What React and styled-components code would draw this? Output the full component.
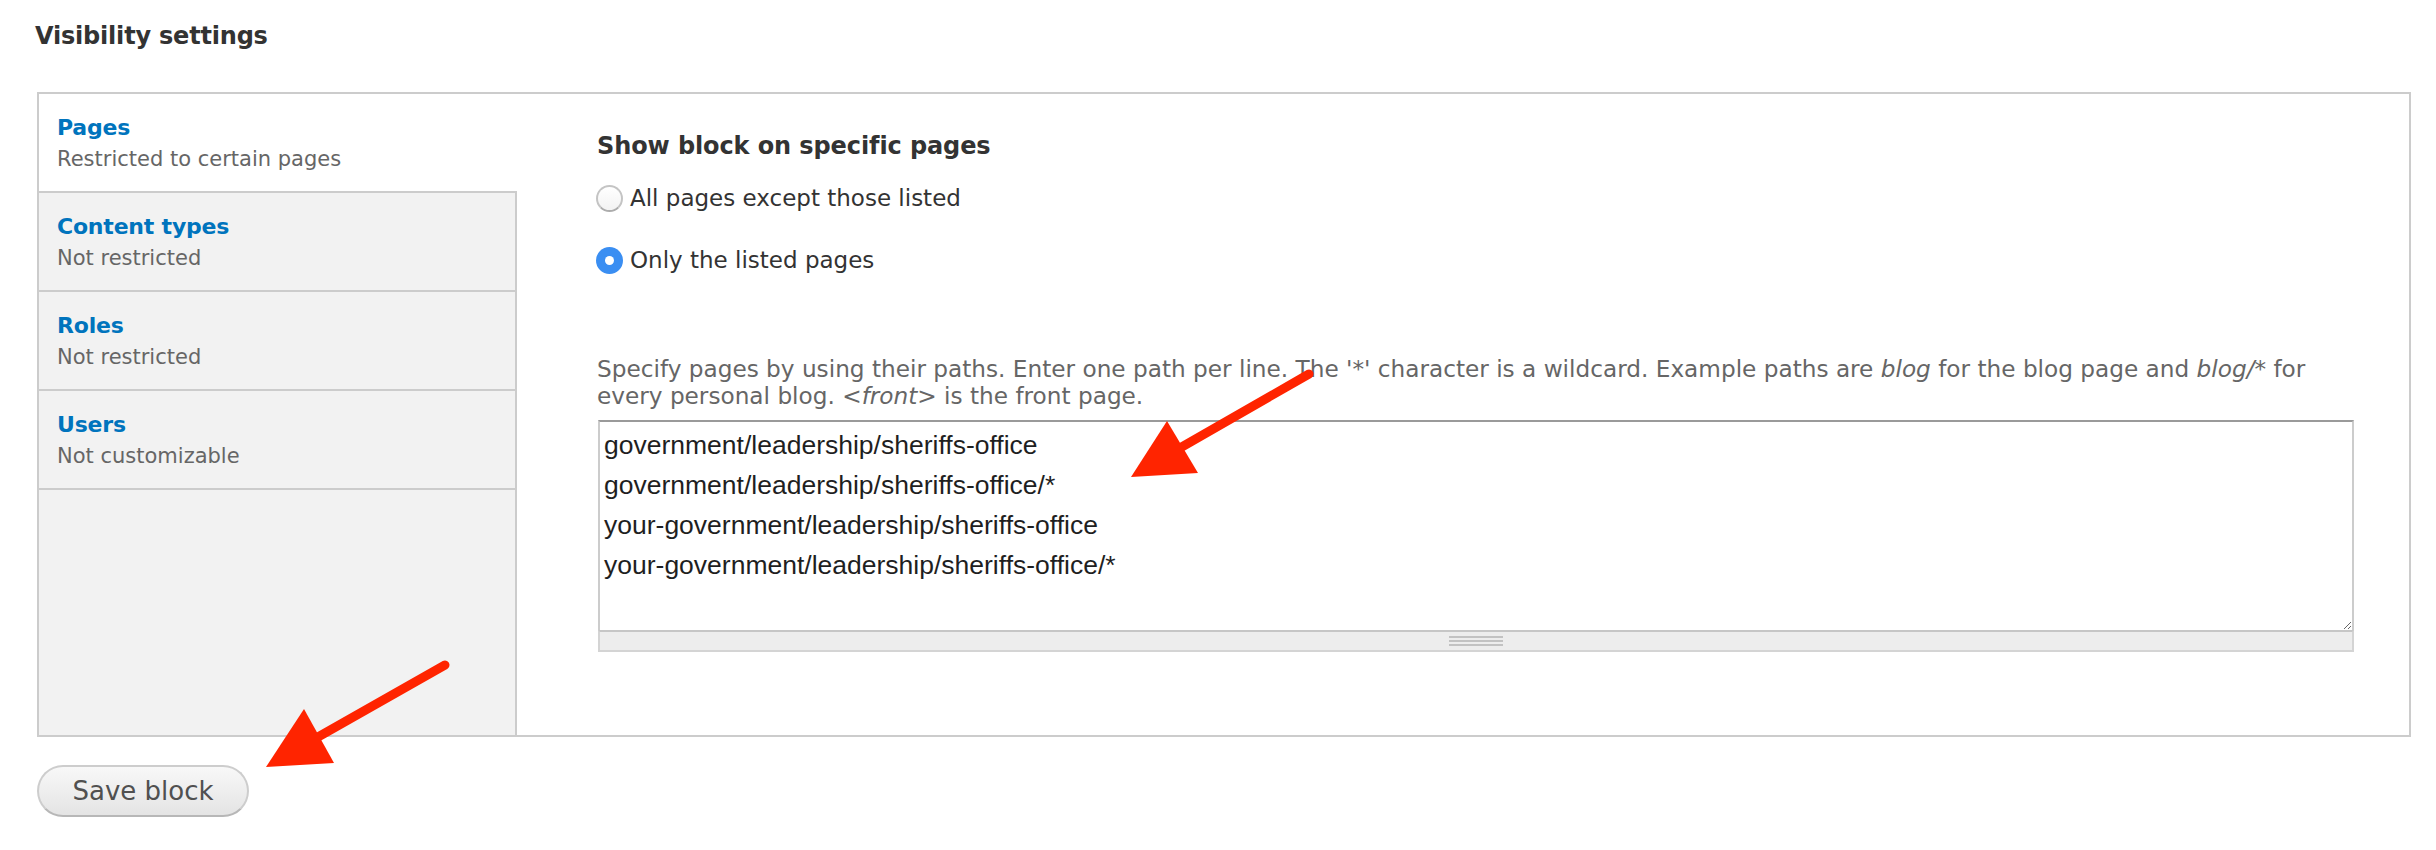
import React from 'react';
import styled, { createGlobalStyle, css } from 'styled-components';

const GlobalStyle = createGlobalStyle`
  html, body { margin: 0; padding: 0; background: #fff; }
  body { font-family: "DejaVu Sans", Verdana, sans-serif; color: #333; }
`;

const Page = styled.div`
  position: relative;
  width: 2436px;
  height: 850px;
  box-sizing: border-box;
  padding: 20px 25px 0 37px;
  overflow: hidden;
`;

const Title = styled.h2`
  margin: 0 0 40px -2px;
  font: bold 24px/32px "DejaVu Sans", Verdana, sans-serif;
  letter-spacing: -0.2px;
  color: #333;
`;

const TabsBox = styled.div`
  display: flex;
  border: 2px solid #ccc;
  background: #fff;
`;

const TabList = styled.ul`
  list-style: none;
  margin: 0;
  padding: 0;
  width: 476px;
  flex: none;
  background: #f2f2f2;
  border-right: 2px solid #ccc;
  display: flex;
  flex-direction: column;
`;

const Tab = styled.li`
  box-sizing: border-box;
  height: 99px;
  padding: 18px 18px 0;
  border-bottom: 2px solid #ccc;
  background: ${(p) => (p.$active ? '#fff' : 'transparent')};
  margin-right: ${(p) => (p.$active ? '-2px' : '0')};
`;

const TabTitle = styled.a`
  display: block;
  font: bold 22px/32px "DejaVu Sans", Verdana, sans-serif;
  letter-spacing: -0.2px;
  color: #0074bd;
  text-decoration: none;
`;

const TabSummary = styled.div`
  font: 21px/30px "DejaVu Sans", Verdana, sans-serif;
  color: #666;
`;

const Pane = styled.div`
  flex: 1;
  min-width: 0;
  padding: 36px 55px 83px 80px;
`;

const Heading = styled.h3`
  margin: 0;
  font: bold 24px/32px "DejaVu Sans", Verdana, sans-serif;
  letter-spacing: -0.1px;
  color: #333;
`;

const RadioGroup = styled.div`
  display: flex;
  flex-direction: column;
  gap: 30px;
  margin-top: 20px;
`;

const RadioRow = styled.label`
  display: flex;
  align-items: center;
  gap: 7px;
  height: 32px;
  margin-left: -1px;
`;

const RadioInput = styled.input.attrs({ type: 'radio' })`
  appearance: none;
  -webkit-appearance: none;
  margin: 0;
  flex: none;
  width: 27px;
  height: 27px;
  border-radius: 50%;
  box-sizing: border-box;
  border: 2px solid #c4c4c4;
  border-bottom-color: #acacac;
  background: linear-gradient(to bottom, #ffffff, #f3f3f3);
  display: flex;
  align-items: center;
  justify-content: center;
  ${(p) =>
    p.defaultChecked &&
    css`
      border: none;
      background: #3a8ef2;
      &::after {
        content: '';
        width: 9px;
        height: 9px;
        border-radius: 50%;
        background: #fff;
      }
    `}
`;

const RadioLabel = styled.span`
  font: 23px/32px "DejaVu Sans", Verdana, sans-serif;
  color: #333;
`;

const Description = styled.div`
  margin-top: 79px;
  font: 23.2px/27px "DejaVu Sans", Verdana, sans-serif;
  color: #666;
  white-space: nowrap;
  em { font-style: italic; }
`;

const TextareaWrap = styled.div`
  margin-top: 11px;
  margin-left: 1px;
`;

const PathsArea = styled.textarea`
  display: block;
  box-sizing: border-box;
  width: 100%;
  height: 210px;
  margin: 0;
  padding: 3px 4px 0;
  border: 2px solid #cccccc;
  border-top-color: #9a9a9a;
  border-bottom: 0;
  border-radius: 0;
  background: #fff;
  font: 26.5px/40px "Liberation Sans", Arial, sans-serif;
  color: #1f1f1f;
  resize: vertical;
  outline: none;
  overflow: hidden;
`;

const Grip = styled.div`
  box-sizing: border-box;
  height: 22px;
  border: 2px solid #d4d4d4;
  border-top-color: #c6c6c6;
  background: #ededed;
  display: flex;
  align-items: center;
  justify-content: center;
`;

const GripLines = styled.span`
  width: 54px;
  height: 10px;
  background: repeating-linear-gradient(to bottom, #c2c2c2 0 2px, transparent 2px 4px);
`;

const Actions = styled.div`
  display: flex;
  margin-top: 28px;
`;

const SaveButton = styled.button`
  box-sizing: border-box;
  width: 212px;
  height: 52px;
  padding: 0;
  border: 2px solid #cdcdcd;
  border-bottom-color: #b7b7b7;
  border-radius: 26px;
  background: linear-gradient(to bottom, #f8f8f8, #e4e4e4);
  font: 26px/1 "DejaVu Sans", Verdana, sans-serif;
  color: #505050;
  cursor: pointer;
`;

const Annotations = styled.svg`
  position: absolute;
  left: 0;
  top: 0;
  width: 2436px;
  height: 850px;
  pointer-events: none;
`;

const tabs = [
  { title: 'Pages', summary: 'Restricted to certain pages', active: true },
  { title: 'Content types', summary: 'Not restricted' },
  { title: 'Roles', summary: 'Not restricted' },
  { title: 'Users', summary: 'Not customizable' },
];

const paths = [
  'government/leadership/sheriffs-office',
  'government/leadership/sheriffs-office/*',
  'your-government/leadership/sheriffs-office',
  'your-government/leadership/sheriffs-office/*',
].join('\n');

function Arrow({ tail, base, head }) {
  return (
    <g fill="#ff2400" stroke="#ff2400">
      <line x1={tail[0]} y1={tail[1]} x2={base[0]} y2={base[1]} strokeWidth="9" strokeLinecap="round" />
      <polygon points={head.map((p) => p.join(',')).join(' ')} stroke="none" />
    </g>
  );
}

export default function App() {
  return (
    <>
      <GlobalStyle />
      <Page>
        <Title>Visibility settings</Title>
        <TabsBox>
          <TabList>
            {tabs.map((t) => (
              <Tab key={t.title} $active={t.active}>
                <TabTitle href="#">{t.title}</TabTitle>
                <TabSummary>{t.summary}</TabSummary>
              </Tab>
            ))}
          </TabList>
          <Pane>
            <Heading>Show block on specific pages</Heading>
            <RadioGroup>
              <RadioRow>
                <RadioInput name="visibility" />
                <RadioLabel>All pages except those listed</RadioLabel>
              </RadioRow>
              <RadioRow>
                <RadioInput name="visibility" defaultChecked />
                <RadioLabel>Only the listed pages</RadioLabel>
              </RadioRow>
            </RadioGroup>
            <Description>
              Specify pages by using their paths. Enter one path per line. The '*' character is a wildcard. Example paths are <em>blog</em> for the blog page and <em>blog/*</em> for
              <br />
              every personal blog. <em>&lt;front&gt;</em> is the front page.
            </Description>
            <TextareaWrap>
              <PathsArea defaultValue={paths} spellCheck={false} />
              <Grip>
                <GripLines />
              </Grip>
            </TextareaWrap>
          </Pane>
        </TabsBox>
        <Actions>
          <SaveButton type="button">Save block</SaveButton>
        </Actions>
        <Annotations viewBox="0 0 2436 850">
          <Arrow
            tail={[1309, 374]}
            base={[1180, 448]}
            head={[[1131, 477], [1167, 421], [1198, 473]]}
          />
          <Arrow
            tail={[445, 665]}
            base={[318, 737]}
            head={[[266, 767], [304, 709], [334, 763]]}
          />
        </Annotations>
      </Page>
    </>
  );
}
